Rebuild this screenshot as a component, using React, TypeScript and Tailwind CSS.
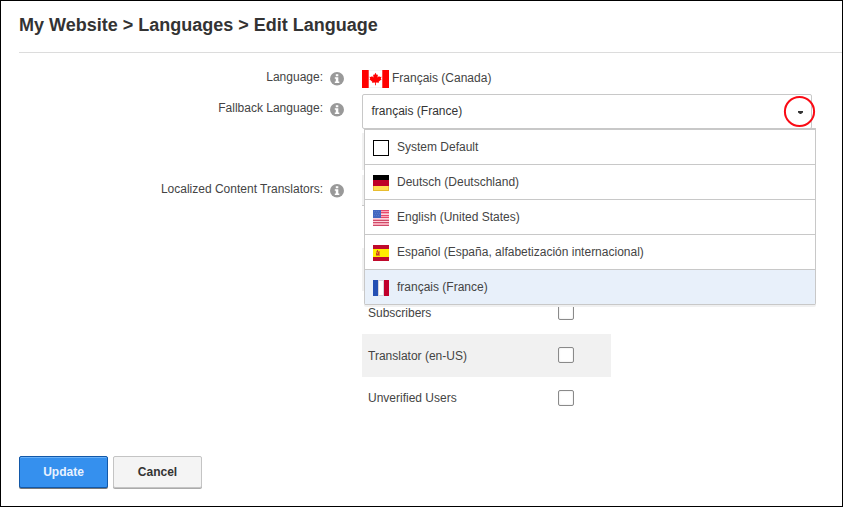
import React from 'react';

const font = "font-['Liberation_Sans',Arial,sans-serif]";

function InfoIcon() {
  return (
    <svg width="14" height="14" viewBox="0 0 14 14" className="shrink-0">
      <ellipse cx="7" cy="6.7" rx="7" ry="6.7" fill="#999" />
      <path d="M5.8 2.2h2.5v2H5.8zM4.8 5.2h3.5v4.3h1V11H4.8V9.5h1V6.7h-1z" fill="#fff" />
    </svg>
  );
}

function CanadaFlag() {
  return (
    <svg width="27" height="18" viewBox="0 0 27 18" className="shrink-0">
      <path fill="#f4f4f4" d="M0 0h27v18H0z" />
      <path fill="#fff" d="M7 1h13v16H7z" />
      <path fill="#f00" d="M0 0h6.7v18H0zM20.3 0H27v18h-6.7z" />
      <path
        fill="#f00"
        d="M13.5 2.8l1.3 2.2 1.1-.5-.4 3.1 1.7-1.5.5.9 1.8-.2-.7 2 .8.5-2.9 2.5.3 1-3.1-.3v2.8h-.8v-2.8l-3.1.3.3-1-2.9-2.5.8-.5-.7-2 1.8.2.5-.9 1.7 1.5-.4-3.1 1.1.5z"
      />
    </svg>
  );
}

type FlagCode = 'none' | 'de' | 'us' | 'es' | 'fr';

function Flag({ code }: { code: FlagCode }) {
  return (
    <svg width="16" height="16" viewBox="0 0 16 16" className="shrink-0" shapeRendering="crispEdges">
      {code === 'none' && <rect x="0.5" y="0.5" width="15" height="15" fill="#fff" stroke="#000" />}
      {code === 'de' && (
        <>
          <path fill="#000" d="M0 0h16v5H0z" />
          <path fill="#be0027" d="M0 5h16v6H0z" />
          <path fill="#e8bd30" d="M0 11h16v5H0z" />
          <path fill="#ffdc50" d="M1 11h14v4H1z" />
        </>
      )}
      {code === 'us' && (
        <>
          <path fill="#f6a9ba" d="M0 0h16v16H0z" />
          <path fill="#e8486a" d="M8 0h8v1H8zM8 2h8v1H8zM8 5h8v1H8zM8 7h8v1H8z" />
          <path fill="#d04a68" d="M0 10h16v1H0zM0 12h16v1H0zM0 15h16v1H0z" />
          <path fill="#fbd3dc" d="M8 4h8v1H8zM0 8h16v1H0zM0 11h16v1H0z" />
          <path fill="#4468c0" d="M0 0h8v8H0z" />
          <path fill="#5878c8" d="M1 1h1v1H1zM3 1h1v1H3zM5 1h1v1H5zM2 3h1v1H2zM4 3h1v1H4zM6 3h1v1H6zM1 5h1v1H1zM3 5h1v1H3zM5 5h1v1H5z" />
        </>
      )}
      {code === 'es' && (
        <>
          <path fill="#c00a2c" d="M0 0h16v16H0z" />
          <path fill="#ffef00" d="M0 4h16v8H0z" />
          <path fill="#e38a25" d="M3 6h4v5H3z" />
          <path fill="#c94221" d="M4 5h1v2H4zM3 8h1v2H3zM5 7h1v2H5zM4 9h2v1H4z" />
        </>
      )}
      {code === 'fr' && (
        <>
          <path fill="#2450b4" d="M0 0h5v16H0z" />
          <path fill="#d5d5dc" d="M5 0h6v16H5z" />
          <path fill="#fff" d="M6 1h4v14H6z" />
          <path fill="#c1002b" d="M11 0h5v16h-5z" />
        </>
      )}
    </svg>
  );
}

const options: { code: FlagCode; label: string }[] = [
  { code: 'none', label: 'System Default' },
  { code: 'de', label: 'Deutsch (Deutschland)' },
  { code: 'us', label: 'English (United States)' },
  { code: 'es', label: 'Español (España, alfabetización internacional)' },
  { code: 'fr', label: 'français (France)' },
];

function Label({ text }: { text: string }) {
  return (
    <div className="flex w-[343px] shrink-0 justify-end gap-[7px]">
      <span className="leading-[16px]">{text}</span>
      <span className="pt-[3px]">
        <InfoIcon />
      </span>
    </div>
  );
}

function RoleRow({ name, shaded, last }: { name: string; shaded?: boolean; last?: boolean }) {
  return (
    <div className={`flex h-[43px] pt-[13px] pl-[6px] ${shaded ? 'bg-[#f1f1f1]' : ''}`}>
      <span className={`w-[190px] leading-[16px] ${last ? '' : 'pt-px'}`}>{name}</span>
      <span className="size-[16px] rounded-[2px] border border-[#8a8a8a] bg-white shadow-[inset_0_0_2px_#ddd]" />
    </div>
  );
}

export default function App() {
  return (
    <div className={`${font} flex h-[507px] w-[843px] flex-col overflow-hidden border border-black bg-white text-[12px] text-[#444]`}>
      <header className="ml-[18px] h-[52px] shrink-0 border-b border-[#dcdcdc] pt-[13px] text-[18px] leading-[22px] font-bold text-[#333]">
        My Website &gt; Languages &gt; Edit Language
      </header>

      <main className="flex h-[403px] shrink-0 flex-col">
        <div className="flex h-[41px] gap-[18px] pt-[16px]">
          <Label text="Language:" />
          <div className="flex gap-[3px] pt-px">
            <CanadaFlag />
            <span className="leading-[16px]">Français (Canada)</span>
          </div>
        </div>

        <div className="flex h-[81px] gap-[18px]">
          <div className="pt-[6px]">
            <Label text="Fallback Language:" />
          </div>
          <div className="relative">
            <div className="flex h-[35px] w-[450px] items-center justify-between rounded-[2px] border border-[#c8c8c8] pr-[8px] pl-[8.5px] text-[#333]">
              <span className="pb-[2px] leading-[16px]">français (France)</span>
              <svg width="5" height="3" viewBox="0 0 5 3" className="mt-[2px]">
                <path d="M0 0h5v1.4L3 3H2L0 1.4z" fill="#333" />
              </svg>
            </div>
            <div className="mt-[4px] h-[37px] w-[249px] bg-[#f1f1f1]" />
            <svg width="33" height="33" viewBox="0 0 33 33" className="absolute top-[1px] left-[421px] z-20">
              <circle cx="16.5" cy="16.5" r="14.6" fill="none" stroke="#fa0a14" strokeWidth="2" />
            </svg>
            <ul className="absolute top-[34px] left-[2px] z-10 w-[452px] rounded-b-[2px] border-x border-t-2 border-[#c8c8c8] bg-white shadow-[0_2px_0_#f0f0f0]">
              {options.map((o) => (
                <li
                  key={o.label}
                  className={`flex h-[35px] items-center gap-[8px] border-b border-[#c8c8c8] pl-[8px] ${o.code === 'fr' ? 'bg-[#e8f0fa]' : ''}`}
                >
                  <span className="pt-px">
                    <Flag code={o.code} />
                  </span>
                  <span className="leading-[16px]">{o.label}</span>
                </li>
              ))}
            </ul>
          </div>
        </div>

        <div className="flex gap-[18px]">
          <div className="pt-[6px]">
            <Label text="Localized Content Translators:" />
          </div>
          <div className="w-[249px]">
            <div className="h-[31px] border-b border-[#c8c8c8] bg-[#f1f1f1]" />
            <div className="h-[42px]" />
            <div className="h-[43px] bg-[#f1f1f1]" />
            <RoleRow name="Subscribers" />
            <RoleRow name="Translator (en-US)" shaded />
            <RoleRow name="Unverified Users" last />
          </div>
        </div>
      </main>

      <footer className="ml-[18px] flex gap-[5px] text-[12px] font-bold">
        <button className="h-[32px] w-[89px] rounded-[2px] border border-[#1258a8] bg-[#3590ee] pb-px text-[#e8f2ff] shadow-[inset_0_1px_0_#68b0f8,0_1px_0_#777]">
          Update
        </button>
        <button className="h-[32px] w-[89px] rounded-[2px] border border-[#c4c4c4] bg-[#f4f4f4] pb-px text-[#333] shadow-[0_1px_0_#aaa]">
          Cancel
        </button>
      </footer>
    </div>
  );
}
